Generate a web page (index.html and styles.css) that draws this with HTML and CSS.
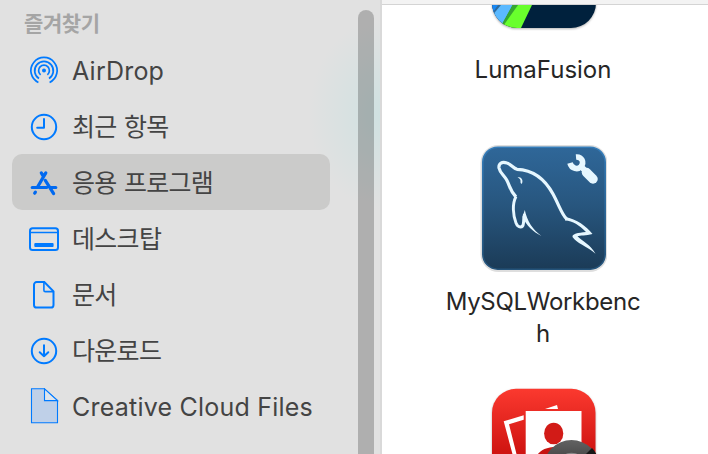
FILE: index.html
```html
<!DOCTYPE html>
<html lang="ko">
<head>
  <meta charset="UTF-8" />
  <meta name="viewport" content="width=device-width, initial-scale=1.0" />
  <title>응용 프로그램</title>
  <link rel="stylesheet" href="styles.css">
</head>
<body>
  <div class="finder">
    <aside class="sidebar">
      <nav class="sidebar-nav">
        <h2>즐겨찾기</h2>
        <ul>
          <li>
            <svg class="icon airdrop" viewBox="0 0 32 36">
              <circle cx="16" cy="18.6" r="2" fill="#007aff" stroke="none" />
              <path d="M12.6 22.8a5.4 5.4 0 1 1 6.8 0M11 26.5a9.3 9.3 0 1 1 10 0M10.4 30.4a13.1 13.1 0 1 1 11.2 0" />
            </svg>
            <span class="latin">AirDrop</span>
          </li>
          <li>
            <svg class="icon" viewBox="0 0 32 36">
              <circle cx="16" cy="19" r="12.2" />
              <path d="M16 11v8.7H9.2" stroke-linecap="round" stroke-linejoin="round" />
            </svg>
            <span>최근 항목</span>
          </li>
          <li class="selected">
            <svg class="icon apps" viewBox="0 0 32 36">
              <path d="M17.8 8.9L9.4 23.2M13.3 8.9l2.2 3.7M17.3 16.4l8.3 13.2M4.2 23.5h14.4M23 23.5h4.8M7.4 28.1l-.7 1.1" />
            </svg>
            <span>응용 프로그램</span>
          </li>
          <li>
            <svg class="icon" viewBox="0 0 32 36">
              <rect x="2" y="8.3" width="28" height="21.8" rx="2.6" />
              <path d="M2.5 12.5h27" stroke-width="1.5" />
              <rect x="6.3" y="22.9" width="19.3" height="4" rx="1" fill="#007aff" stroke="none" />
            </svg>
            <span>데스크탑</span>
          </li>
          <li>
            <svg class="icon" viewBox="0 0 32 36">
              <path d="M8.6 6.1h7.7l9.2 9.2v13.6a2.6 2.6 0 0 1-2.6 2.6H8.6a2.6 2.6 0 0 1-2.6-2.6V8.7a2.6 2.6 0 0 1 2.6-2.6z" />
              <path d="M15.9 6.5v7.7a1.4 1.4 0 0 0 1.4 1.4h7.8" stroke-width="1.6" />
            </svg>
            <span>문서</span>
          </li>
          <li>
            <svg class="icon" viewBox="0 0 32 36">
              <circle cx="16" cy="19" r="12.2" />
              <path d="M16 13.3v10.9M11.7 20.3l4.3 4 4.3-4" stroke-linecap="round" stroke-linejoin="round" />
            </svg>
            <span>다운로드</span>
          </li>
          <li>
            <svg class="icon" viewBox="0 0 32 36">
              <path d="M3.5 .7h12.8l13.2 11.8v22.2h-26z" fill="#bfd0e8" stroke-width="1.1" />
              <path d="M16.5 .9v11.7h13z" fill="#dfe5ec" stroke-width="1.1" />
            </svg>
            <span class="latin">Creative Cloud Files</span>
          </li>
        </ul>
      </nav>
      <div class="scrollbar"></div>
    </aside>

    <main class="content">
      <div class="toolbar"></div>
      <div class="apps-list">
        <div class="app">
          <svg class="app-icon" viewBox="0 0 128 128">
            <defs>
              <clipPath id="luma-clip"><rect x="13" y="12" width="104" height="104" rx="25" /></clipPath>
            </defs>
            <g clip-path="url(#luma-clip)">
              <path fill="#00213d" d="M12 12h106v104H12z" />
              <path fill="#1687f5" d="M12 85h14L12 104z" />
              <path fill="#2d699c" d="M19 93h4l-7 12-4-2z" />
              <path fill="#5bb9ff" d="M22 93h12L23 113l-11-8z" />
              <path fill="#36a62f" d="M33.5 93h6L25 115l-2-3z" />
              <path fill="#69ff2d" d="M39 93h14L41.500 117H22z" />
            </g>
          </svg>
          <div class="label">LumaFusion</div>
        </div>

        <div class="app">
          <svg class="app-icon flat" viewBox="0 0 128 128">
            <defs>
              <linearGradient id="sea" x1="0" y1="0" x2="0" y2="1">
                <stop offset="0" stop-color="#2f6799" />
                <stop offset="0.45" stop-color="#285780" />
                <stop offset="1" stop-color="#1b3b57" />
              </linearGradient>
              <linearGradient id="sea-edge" x1="0" y1="0" x2="0" y2="1">
                <stop offset="0" stop-color="#347cb9" />
                <stop offset="1" stop-color="#24537a" />
              </linearGradient>
            </defs>
            <rect x="1.5" y="1" width="127" height="127" rx="18" fill="#dedede" />
            <rect x="3.8" y="3.2" width="122.4" height="122" rx="15" fill="url(#sea)" stroke="url(#sea-edge)" stroke-width="1.6" />
            <g fill="none" stroke="#e6f7ff" stroke-linejoin="round">
              <path stroke-width="3.2" d="M37 53C31 47 31 42 27.7 36C25 31 21 29 20 24C19.5 19 23 17.5 28 19C32 20 34 24 38 25.3C56 26 67 37 74 50C80 61 83 71 87.7 75" />
              <path stroke-width="2.9" d="M37 52.5C33 60 34 71 37 79C39 84 44 84.5 44.5 79C44.5 75 45 72 45.5 70" />
            </g>
            <g fill="#e6f7ff">
              <path d="M45.8 66C48 77 54 86 62.5 92C54 88 47 81 43.5 73z" />
              <path d="M86 73C98 75 107 82 113.5 90C107 92 101 91 98.5 92.3C103 97 112 101 116.5 109.8C108 102 97 99 93.5 93C93 89.5 99 89 107 88C100 81 94 77 86 76.5z" />
              <path d="M38.5 33c4.5 0 6 3.5 4.3 7c-.8-.5-1.3-1-1.3-2c.5-2-.8-3.5-3-5z" />
            </g>
            <g fill="none" stroke="#e6f7ff">
              <path stroke-width="5.6" d="M97 13c6-.5 8.500 5.500 5 9.500-3 3.500-9.500 2.500-11-3.500" />
              <path stroke-width="6" d="M101.500 22l5 5" />
              <path stroke-width="9.5" stroke-linecap="round" d="M107.500 28.500l6.500 6.500" />
            </g>
          </svg>
          <div class="label mysql">MySQLWorkbench</div>
        </div>

        <div class="app">
          <svg class="app-icon" viewBox="0 0 128 128">
            <defs>
              <linearGradient id="red" x1="0" y1="0" x2="0" y2="1">
                <stop offset="0" stop-color="#fb392f" />
                <stop offset="0.6" stop-color="#d01512" />
                <stop offset="1" stop-color="#bd0d0b" />
              </linearGradient>
              <linearGradient id="lens" x1="0" y1="0" x2="0" y2="1">
                <stop offset="0" stop-color="#626262" />
                <stop offset="0.4" stop-color="#424242" />
              </linearGradient>
            </defs>
            <rect x="13" y="12.8" width="103.5" height="104" rx="24" fill="url(#red)" />
            <path fill="#fff" d="M24.7 45.3L44.7 39.3v4.5L30 48.3L38 80h-4z" />
            <path fill="#fff" d="M66 33l12-4 1 4z" />
            <path fill="#fff" d="M46.7 35H102.5V104H46.7z" />
            <ellipse cx="74.7" cy="57.5" rx="9.6" ry="10.8" fill="#d21b17" />
            <path fill="#c71512" d="M57 84c0-7 7-12 17-13l18 2v17H57z" />
            <circle cx="92.500" cy="92" r="28" fill="url(#lens)" />
            <path fill="#171717" d="M102 83l11-11c5 5 7 12 7 19z" />
            <path fill="#888" d="M85 79c4-3 11-3 15 0z" />
          </svg>
          <div class="label"></div>
        </div>
      </div>
    </main>
  </div>
</body>
</html>
```

FILE: styles.css
```css
* {
  box-sizing: border-box;
}
body {
  margin: 0;
  font-family: Inter, "Noto Sans CJK KR", sans-serif;
  background: #fff;
  color: #262626;
}
.finder {
  display: flex;
  height: 454px;
  overflow: hidden;
}
.sidebar {
  display: flex;
  width: 382px;
  background: radial-gradient(ellipse 75px 96px at 384px 114px, #cfe1e1 0%, #d8e1e1 50%, #e1e1e1 100%) #e1e1e1;
  border-right: 2px solid #d9d9d9;
}
.sidebar-nav {
  width: 358px;
  padding-left: 12px;
}
.sidebar h2 {
  margin: 0;
  height: 42px;
  padding: 6px 0 0 12px;
  font-family: "Noto Sans CJK KR", sans-serif;
  font-size: 21px;
  line-height: 32px;
  font-weight: 700;
  letter-spacing: -0.4px;
  color: #a5a5a5;
}
.sidebar ul {
  list-style: none;
  margin: 0;
  padding: 0;
}
.sidebar li {
  display: flex;
  align-items: center;
  gap: 12px;
  width: 318px;
  height: 56px;
  padding-left: 16px;
  border-radius: 10px;
  font-family: "Noto Sans CJK KR", sans-serif;
  font-size: 25px;
  line-height: 36px;
  letter-spacing: -0.7px;
  word-spacing: 1px;
  white-space: nowrap;
  color: #444;
}
.sidebar li.selected {
  background: #cbcbca;
}
.sidebar li span {
  padding-bottom: 3px;
}
.sidebar li .latin {
  padding: 2px 0 0;
  font-family: Inter, sans-serif;
  letter-spacing: 0.22px;
  word-spacing: 0;
}
.icon {
  width: 32px;
  height: 36px;
  fill: none;
  stroke: #007aff;
  stroke-width: 2;
}
.icon.airdrop {
  stroke-width: 1.7;
}
.icon.apps {
  stroke: #0069f0;
  stroke-width: 3.2;
  stroke-linecap: round;
}
.scrollbar {
  width: 16px;
  margin-top: 10px;
  border-radius: 8px 8px 0 0;
  background: rgba(0, 0, 0, 0.22);
}
.content {
  flex: 1;
  background: #fff;
}
.toolbar {
  height: 5px;
  background: #f3f3f3;
  border-bottom: 1px solid #d4d4d4;
}
.apps-list {
  display: flex;
  flex-direction: column;
  width: 322px;
  height: 449px;
  overflow: hidden;
}
.app {
  display: flex;
  flex: none;
  flex-direction: column;
  align-items: center;
  height: 232px;
}
.app:first-child {
  margin-top: -93px;
}
.app-icon {
  flex: none;
  width: 128px;
  height: 128px;
  filter: drop-shadow(0 1px 1px rgba(0, 0, 0, 0.3));
}
.app-icon.flat {
  filter: none;
}
.label {
  width: 204px;
  margin-top: 14px;
  font-size: 24px;
  line-height: 32px;
  text-align: center;
  word-break: break-all;
}
.label.mysql {
  letter-spacing: -0.3px;
  width: 200px;
}
```
